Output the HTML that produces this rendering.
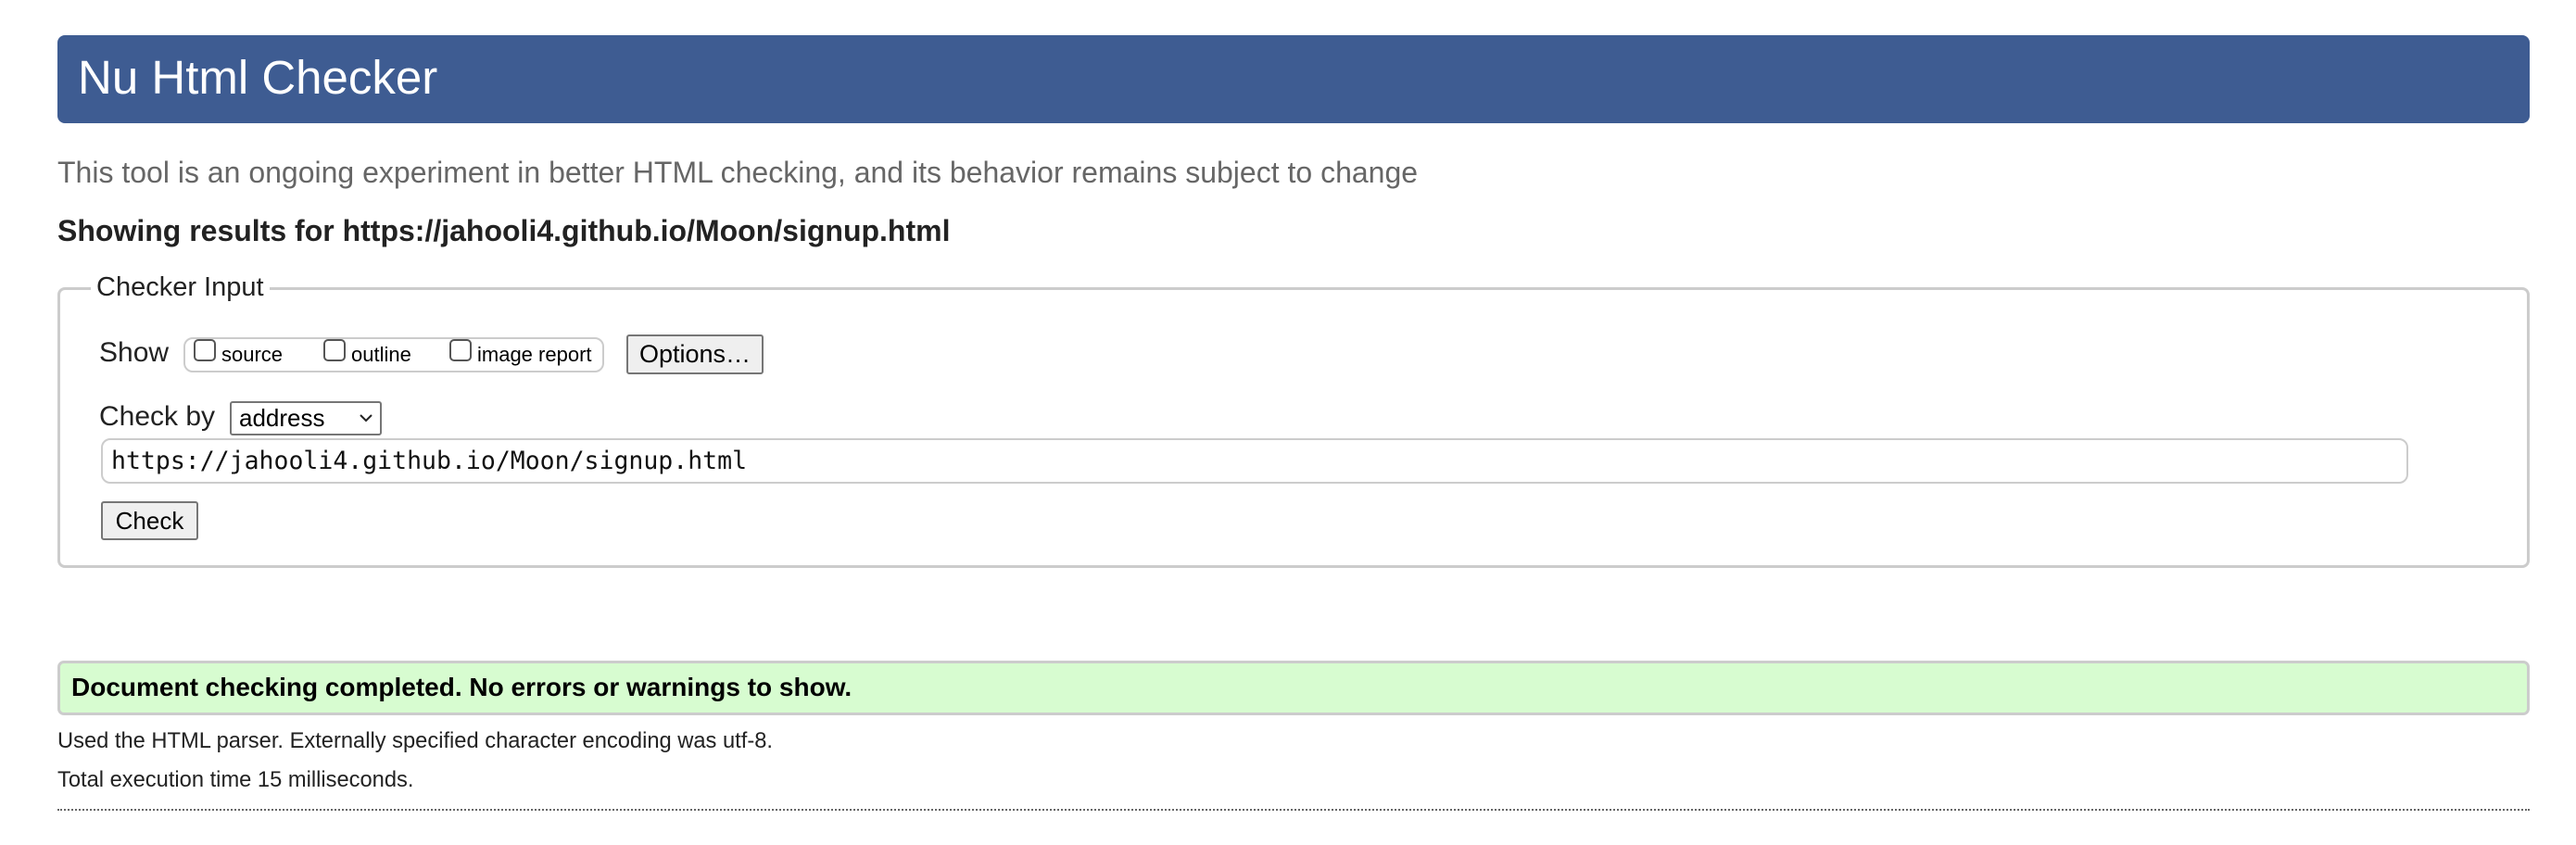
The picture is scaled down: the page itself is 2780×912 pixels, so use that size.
<!DOCTYPE html>
<html><head><meta charset="utf-8"><style>
*{box-sizing:border-box;margin:0;padding:0}
body{width:2780px;height:912px;background:#fff;position:relative;overflow:hidden;font-family:"Liberation Sans",Arial,sans-serif;color:#000}
.a{position:absolute;white-space:nowrap}
</style></head><body>
<div class="a" style="left:62px;top:38px;width:2668px;height:95px;background:#3e5c92;border-radius:8px"></div>
<div class="a" style="left:84px;top:54px;font-size:51px;line-height:60px;color:#fff">Nu Html Checker</div>
<div class="a" style="left:62px;top:167px;font-size:32px;line-height:38px;color:#666">This tool is an ongoing experiment in better HTML checking, and its behavior remains subject to change</div>
<div class="a" style="left:62px;top:230px;font-size:32px;line-height:38px;font-weight:bold;color:#222">Showing results for https://jahooli4.github.io/Moon/signup.html</div>
<div class="a" style="left:62px;top:310px;width:2668px;height:303px;border:3px solid #ccc;border-radius:8px"></div>
<div class="a" style="left:98px;top:292px;padding:0 6px;background:#fff;font-size:29px;line-height:36px;color:#222">Checker Input</div>
<div class="a" style="left:107px;top:362px;font-size:30px;line-height:38px;color:#222">Show</div>
<div class="a" style="left:198px;top:364px;width:454px;height:38px;border:2px solid #ccc;border-radius:10px"></div>
<div class="a" style="left:209px;top:366px;width:24px;height:24px;border:2px solid #555;border-radius:5px"></div>
<div class="a" style="left:239px;top:369px;font-size:22px;line-height:28px">source</div>
<div class="a" style="left:349px;top:366px;width:24px;height:24px;border:2px solid #555;border-radius:5px"></div>
<div class="a" style="left:379px;top:369px;font-size:22px;line-height:28px">outline</div>
<div class="a" style="left:485px;top:366px;width:24px;height:24px;border:2px solid #555;border-radius:5px"></div>
<div class="a" style="left:515px;top:369px;font-size:22px;line-height:28px">image report</div>
<div class="a" style="left:676px;top:361px;width:148px;height:43px;border:2px solid #767676;border-radius:3px;background:#efefef;font-size:27px;line-height:39px;text-align:center">Options…</div>
<div class="a" style="left:107px;top:431px;font-size:30px;line-height:38px;color:#222">Check by</div>
<div class="a" style="left:248px;top:433px;width:164px;height:37px;border:2px solid #767676;border-radius:3px;background:#fff;font-size:26px;line-height:33px;padding-left:8px">address</div>
<svg class="a" style="left:387px;top:444px" width="16" height="14"><path d="M2 4 L8 10 L14 4" fill="none" stroke="#222" stroke-width="2"/></svg>
<div class="a" style="left:109px;top:473px;width:2490px;height:49px;border:2px solid #ccc;border-radius:10px"></div>
<div class="a" style="left:120px;top:480px;font-family:'DejaVu Sans Mono','Liberation Mono',monospace;font-size:26.5px;line-height:36px;color:#111">https://jahooli4.github.io/Moon/signup.html</div>
<div class="a" style="left:109px;top:541px;width:105px;height:42px;border:2px solid #767676;border-radius:3px;background:#efefef;font-size:26px;line-height:38px;text-align:center">Check</div>
<div class="a" style="left:62px;top:713px;width:2668px;height:59px;background:#d7fcd0;border:3px solid #ccc;border-radius:7px"></div>
<div class="a" style="left:77px;top:724px;font-size:28px;line-height:36px;font-weight:bold">Document checking completed. No errors or warnings to show.</div>
<div class="a" style="left:62px;top:785px;font-size:23.7px;line-height:30px;color:#222">Used the HTML parser. Externally specified character encoding was utf-8.</div>
<div class="a" style="left:62px;top:827px;font-size:23.7px;line-height:30px;color:#222">Total execution time 15 milliseconds.</div>
<div class="a" style="left:62px;top:873px;width:2668px;height:0;border-top:2px dotted #666"></div>
</body></html>
